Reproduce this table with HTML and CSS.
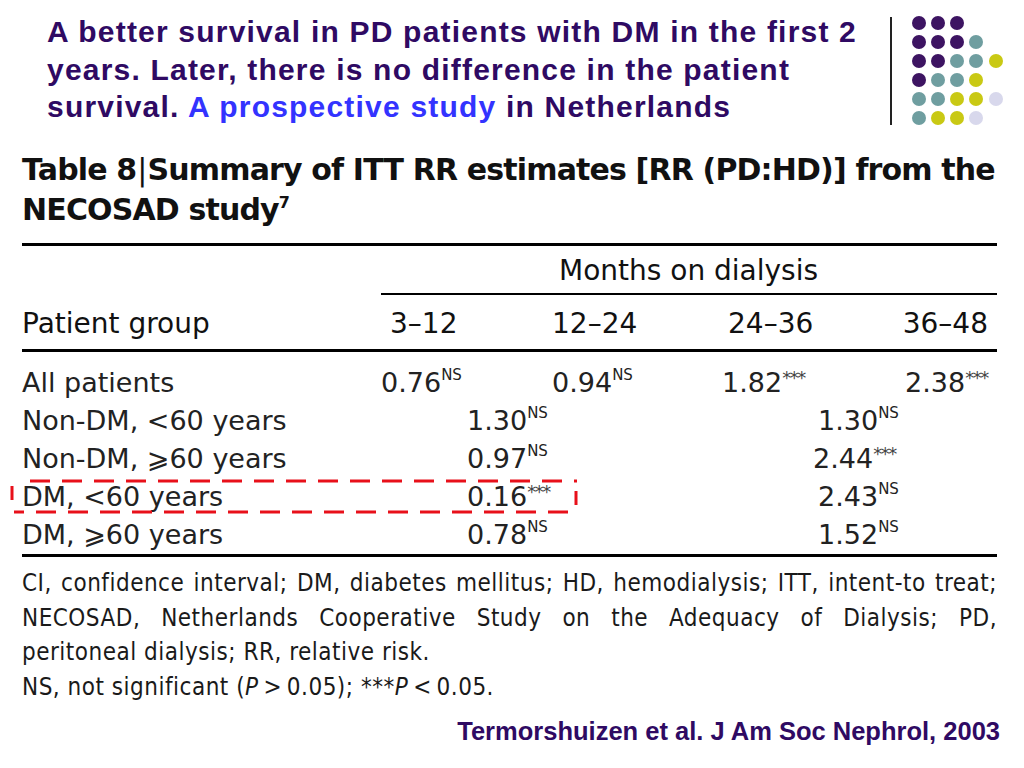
FILE: index.html
```html
<!DOCTYPE html>
<html lang="en">
<head>
<meta charset="utf-8">
<title>Survival PD vs HD</title>
<link rel="stylesheet" href="styles.css">
</head>
<body>
<div class="slide">
  <header class="head">
    <h1 class="title">A better survival in PD patients with DM in the first 2<br>years. Later, there is no difference in the patient<br>survival. <span class="hl">A prospective study</span> in Netherlands</h1>
    <div class="logo">
      <div class="vline"></div>
      <svg class="dots" width="100" height="112" viewBox="0 0 100 112">
        <g fill="#3d1462">
          <circle cx="7" cy="7" r="7"/><circle cx="26" cy="7" r="7"/><circle cx="45" cy="7" r="7"/>
          <circle cx="7" cy="26" r="7"/><circle cx="26" cy="26" r="7"/><circle cx="45" cy="26" r="7"/>
          <circle cx="7" cy="45" r="7"/><circle cx="26" cy="45" r="7"/>
          <circle cx="7" cy="64" r="7"/>
        </g>
        <g fill="#6f9ea0">
          <circle cx="64" cy="26" r="7"/>
          <circle cx="45" cy="45" r="7"/><circle cx="64" cy="45" r="7"/>
          <circle cx="26" cy="64" r="7"/><circle cx="45" cy="64" r="7"/>
          <circle cx="7" cy="83" r="7"/><circle cx="26" cy="83" r="7"/>
          <circle cx="7" cy="102" r="7"/>
        </g>
        <g fill="#c9c914">
          <circle cx="84" cy="45" r="7"/>
          <circle cx="64" cy="64" r="7"/>
          <circle cx="45" cy="83" r="7"/><circle cx="64" cy="83" r="7"/>
          <circle cx="26" cy="102" r="7"/><circle cx="45" cy="102" r="7"/>
        </g>
        <g fill="#d8d8ec">
          <circle cx="84" cy="83" r="7"/>
          <circle cx="64" cy="102" r="7"/>
        </g>
      </svg>
    </div>
  </header>

  <section class="tbl">
    <h2 class="ttitle">Table 8<span class="bar">|</span>Summary of ITT RR estimates [RR (PD:HD)] from the<br>NECOSAD study<sup class="ref">7</sup></h2>
    <div class="rule thick"></div>
    <div class="grid">
      <div class="months">Months on dialysis</div>
      <div class="rule thin span4"></div>

      <div class="hrow lab">Patient group</div>
      <div class="hrow c1">3–12</div>
      <div class="hrow c2">12–24</div>
      <div class="hrow c3">24–36</div>
      <div class="hrow c4">36–48</div>
    </div>
    <div class="rule thick"></div>
    <div class="grid body">
      <div class="lab">All patients</div>
      <div>0.76<sup class="ns">NS</sup></div>
      <div>0.94<sup class="ns">NS</sup></div>
      <div>1.82<sup class="st">***</sup></div>
      <div class="last">2.38<sup class="st">***</sup></div>

      <div class="lab">Non-DM, &lt;60 years</div>
      <div class="ml">1.30<sup class="ns">NS</sup></div>
      <div class="mr">1.30<sup class="ns">NS</sup></div>

      <div class="lab">Non-DM, ⩾60 years</div>
      <div class="ml">0.97<sup class="ns">NS</sup></div>
      <div class="mr w">2.44<sup class="st">***</sup></div>

      <div class="lab">DM, &lt;60 years</div>
      <div class="ml">0.16<sup class="st">***</sup></div>
      <div class="mr">2.43<sup class="ns">NS</sup></div>

      <div class="lab">DM, ⩾60 years</div>
      <div class="ml">0.78<sup class="ns">NS</sup></div>
      <div class="mr">1.52<sup class="ns">NS</sup></div>
    </div>
    <div class="rule thick"></div>
    <div class="notes">
      <p class="j">CI, confidence interval; DM, diabetes mellitus; HD, hemodialysis; ITT, intent-to treat;</p>
      <p class="j">NECOSAD, Netherlands Cooperative Study on the Adequacy of Dialysis; PD,</p>
      <p>peritoneal dialysis; RR, relative risk.</p>
      <p>NS, not significant (<i>P</i>&thinsp;&gt;&thinsp;0.05); ***<i>P</i>&thinsp;&lt;&thinsp;0.05.</p>
    </div>
  </section>

  <footer class="cite">Termorshuizen et al. J Am Soc Nephrol, 2003</footer>

  <svg class="mark" width="1024" height="768" viewBox="0 0 1024 768">
    <path d="M30 481 H577 M576 491 V505 M568 512 H14 M12 486 V500" fill="none" stroke="#e8101a" stroke-width="3" stroke-dasharray="20 12"/>
  </svg>
</div>
</body>
</html>
```
FILE: styles.css
```css
html, body {
  margin: 0;
  padding: 0;
  background: #ffffff;
}
.slide {
  position: relative;
  width: 1024px;
  height: 768px;
  overflow: hidden;
  background: #ffffff;
}
.head {
  display: flex;
  align-items: flex-start;
  height: 140px;
}
.title {
  margin: 13px 0 0 47px;
  width: 830px;
  flex: none;
  white-space: nowrap;
  font-family: "Liberation Sans", Arial, sans-serif;
  font-weight: bold;
  font-size: 30px;
  letter-spacing: 1.2px;
  line-height: 37.5px;
  color: #2f0a63;
}
.hl {
  color: #3333ff;
}
.logo {
  display: flex;
  margin-left: 13px;
  margin-top: 17px;
}
.vline {
  width: 2px;
  height: 108px;
  background: #222;
}
.dots {
  margin-left: 20px;
  margin-top: -1px;
}
.tbl {
  margin: 0 27px 0 22px;
  font-family: "DejaVu Sans", Verdana, sans-serif;
  color: #1a1a1a;
}
.ttitle {
  margin: 0;
  padding-top: 10px;
  font-size: 30px;
  font-weight: bold;
  line-height: 40px;
  letter-spacing: -0.85px;
  white-space: nowrap;
  color: #111;
}
.bar {
  font-weight: normal;
  margin: 0 1px;
}
.ref {
  font-size: 16px;
  vertical-align: 12px;
  line-height: 0;
}
.rule {
  background: #000;
}
.thick {
  height: 3px;
}
.thin {
  height: 2px;
}
.ttitle + .rule {
  margin-top: 13px;
}
.grid {
  display: grid;
  grid-template-columns: 359px 171px 170px 180px 95px;
  font-size: 27px;
  white-space: nowrap;
}
.months {
  grid-column: 2 / 6;
  height: 47px;
  line-height: 50px;
  padding-left: 178px;
  font-size: 28px;
  color: #111;
}
.span4 {
  grid-column: 2 / 6;
}
.hrow {
  height: 54px;
  line-height: 58px;
  font-size: 28px;
  color: #111;
}
.hrow.c1 { padding-left: 9px; }
.hrow.c3 { padding-left: 6px; }
.hrow.c4 { justify-self: end; padding-right: 9px; }
.body {
  padding: 12px 0 0;
  line-height: 38px;
  color: #222;
}
.body .last {
  padding-left: 3px;
}
.ml {
  grid-column: 2 / 4;
  padding-left: 86px;
}
.mr {
  grid-column: 4 / 6;
  padding-left: 96px;
}
.mr.w {
  padding-left: 91px;
}
sup {
  line-height: 0;
}
.ns {
  font-size: 15px;
  vertical-align: 12px;
}
.st {
  font-size: 18px;
  vertical-align: 8px;
  letter-spacing: -1.5px;
  color: #444;
}
.notes {
  margin-top: 9px;
  font-family: "Liberation Sans Narrow", "DejaVu Sans Condensed", "Roboto Condensed", sans-serif;
  font-size: 24px;
  line-height: 34.5px;
  letter-spacing: 0.5px;
  color: #1a1a1a;
}
.notes p {
  margin: 0;
  white-space: nowrap;
}
.notes p.j {
  text-align: justify;
  text-align-last: justify;
  white-space: normal;
}
.cite {
  position: absolute;
  right: 24px;
  top: 717px;
  font-family: "Liberation Sans", Arial, sans-serif;
  font-weight: bold;
  font-size: 25.5px;
  color: #2f0a63;
}
.mark {
  position: absolute;
  left: 0;
  top: 0;
  pointer-events: none;
}
```
